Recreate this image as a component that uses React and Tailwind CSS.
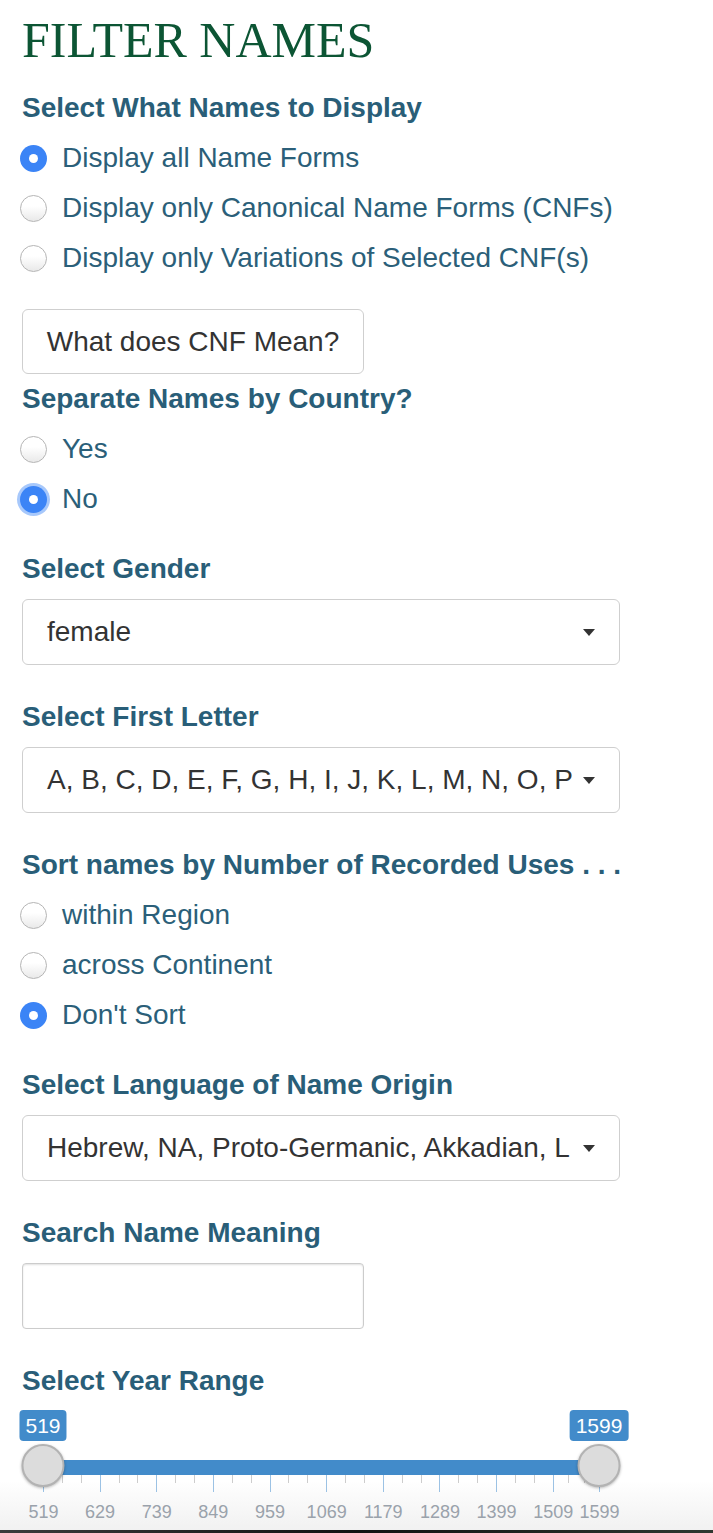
import clsx from "clsx";

const MIN = 519;
const MAX = 1599;
const TRACK_START = 21;
const TRACK_WIDTH = 556;

const pos = (v) => TRACK_START + ((v - MIN) / (MAX - MIN)) * TRACK_WIDTH;

const majors = [519, 629, 739, 849, 959, 1069, 1179, 1289, 1399, 1509, 1599];

// two small ticks between each pair of labelled ticks
const minors = majors.slice(0, -1).flatMap((v, i) => {
  const next = majors[i + 1];
  const step = (next - v) / 3;
  return [v + step, v + step * 2];
});

const Label = ({ children, className }) => (
  <div
    className={clsx(
      "flex h-[50px] items-center text-[28px] font-bold leading-none text-[#295e78]",
      className
    )}
  >
    {children}
  </div>
);

const Radio = ({ label, checked, focused }) => (
  <div className="flex h-[50px] items-center">
    <span
      className={clsx(
        "-ml-[2px] flex h-[27px] w-[27px] shrink-0 items-center justify-center rounded-full",
        checked
          ? "bg-[#3b84f6]"
          : "border border-[#b5b5b5] bg-linear-to-b from-white from-40% to-[#e9e9e9]",
        focused && "ring-[3px] ring-[#3b84f6]/45"
      )}
    >
      {checked && <span className="h-[9px] w-[9px] rounded-full bg-white" />}
    </span>
    <span className="ml-[15px] text-[28px] leading-none text-[#2b5f79]">
      {label}
    </span>
  </div>
);

const Select = ({ value, className }) => (
  <div
    className={clsx(
      "flex h-[66px] w-[598px] items-center rounded-[6px] border-[1.5px] border-[#cfcfcf] bg-white pl-[24px] pr-[24px]",
      className
    )}
  >
    <span className="flex-1 whitespace-nowrap text-[28px] leading-[34px] text-[#333]">
      {value}
    </span>
    {/* caret */}
    <span className="ml-[8px] h-0 w-0 border-l-[6.5px] border-r-[6.5px] border-t-[7px] border-l-transparent border-r-transparent border-t-[#333]" />
  </div>
);

const Handle = ({ value }) => (
  <div
    className="absolute top-[38px] h-[43px] w-[43px] -translate-x-1/2 rounded-full border-2 border-[#b3b3b3] bg-[#dcdcdc] shadow-[0_1px_3px_rgba(0,0,0,0.3)]"
    style={{ left: pos(value) }}
  />
);

const Bubble = ({ value }) => (
  <div
    className="absolute top-[4px] flex h-[31px] -translate-x-1/2 items-center rounded-[4px] bg-[#428bca] px-[6px] text-[21px] leading-none text-white"
    style={{ left: pos(value) }}
  >
    {value}
  </div>
);

const YearSlider = () => (
  <div className="relative h-[124px] bg-linear-to-b from-white from-60% to-[#f1f1f1] -mx-[22px] px-[22px]">
    <div className="relative h-full">
      <Bubble value={MIN} />
      <Bubble value={MAX} />

      {/* bar */}
      <div
        className="absolute top-[54px] h-[15px] bg-[#428bca]"
        style={{ left: pos(MIN), width: pos(MAX) - pos(MIN) }}
      />

      {/* grid */}
      {minors.map((v) => (
        <span
          key={v}
          className="absolute top-[69px] h-[8px] w-px bg-[#cdcdcd]"
          style={{ left: pos(v) }}
        />
      ))}
      {majors.map((v) => (
        <span
          key={v}
          className="absolute top-[69px] h-[17px] w-px bg-[#9cc2e4]"
          style={{ left: pos(v) }}
        />
      ))}
      {majors.map((v) => (
        <span
          key={`l${v}`}
          className="absolute top-[97px] -translate-x-1/2 text-[18px] leading-[18px] text-[#9aa2ab]"
          style={{ left: pos(v) + 0.5 }}
        >
          {v}
        </span>
      ))}

      <Handle value={MIN} />
      <Handle value={MAX} />
    </div>
  </div>
);

const App = () => {
  return (
    <div className="w-[713px] bg-white font-['Liberation_Sans',Arial,sans-serif]">
      <div className="px-[22px]">
        {/* Title */}
        <div className="h-[83px] pt-[15px] font-['Liberation_Serif','Times_New_Roman',serif] text-[50px] leading-[50px] text-[#0c5534]">
          FILTER NAMES
        </div>

        {/* Name forms */}
        <Label>Select What Names to Display</Label>
        <Radio label="Display all Name Forms" checked />
        <Radio label="Display only Canonical Name Forms (CNFs)" />
        <Radio label="Display only Variations of Selected CNF(s)" />

        <button className="mt-[26px] flex h-[65px] w-[342px] items-center justify-center rounded-[6px] border-[1.5px] border-[#cfcfcf] bg-white text-[28px] leading-none text-[#333]">
          What does CNF Mean?
        </button>

        {/* Country */}
        <Label className="h-[48px]">Separate Names by Country?</Label>
        <Radio label="Yes" />
        <Radio label="No" checked focused />

        {/* Gender */}
        <Label className="mt-[20px]">Select Gender</Label>
        <Select className="mt-[5px]" value="female" />

        {/* First letter */}
        <Label className="mt-[27px]">Select First Letter</Label>
        <Select
          className="mt-[5px]"
          value="A, B, C, D, E, F, G, H, I, J, K, L, M, N, O, P"
        />

        {/* Sort */}
        <Label className="mt-[27px]">Sort names by Number of Recorded Uses . . .</Label>
        <Radio label="within Region" />
        <Radio label="across Continent" />
        <Radio label="Don't Sort" checked />

        {/* Language */}
        <Label className="mt-[20px]">Select Language of Name Origin</Label>
        <Select
          className="mt-[5px]"
          value="Hebrew, NA, Proto-Germanic, Akkadian, L"
        />

        {/* Meaning */}
        <Label className="mt-[27px]">Search Name Meaning</Label>
        <input
          type="text"
          className="mt-[5px] block h-[66px] w-[342px] rounded-[4px] border-[1.5px] border-[#cccccc] bg-white shadow-[inset_0_1px_2px_rgba(0,0,0,0.12)] outline-none"
        />

        {/* Years */}
        <Label className="mt-[27px]">Select Year Range</Label>
        <YearSlider />
      </div>

      <div className="h-[5px] bg-linear-to-r from-[#3c3c3c] via-[#121212] to-[#2e3830]" />
    </div>
  );
};

export default App;
